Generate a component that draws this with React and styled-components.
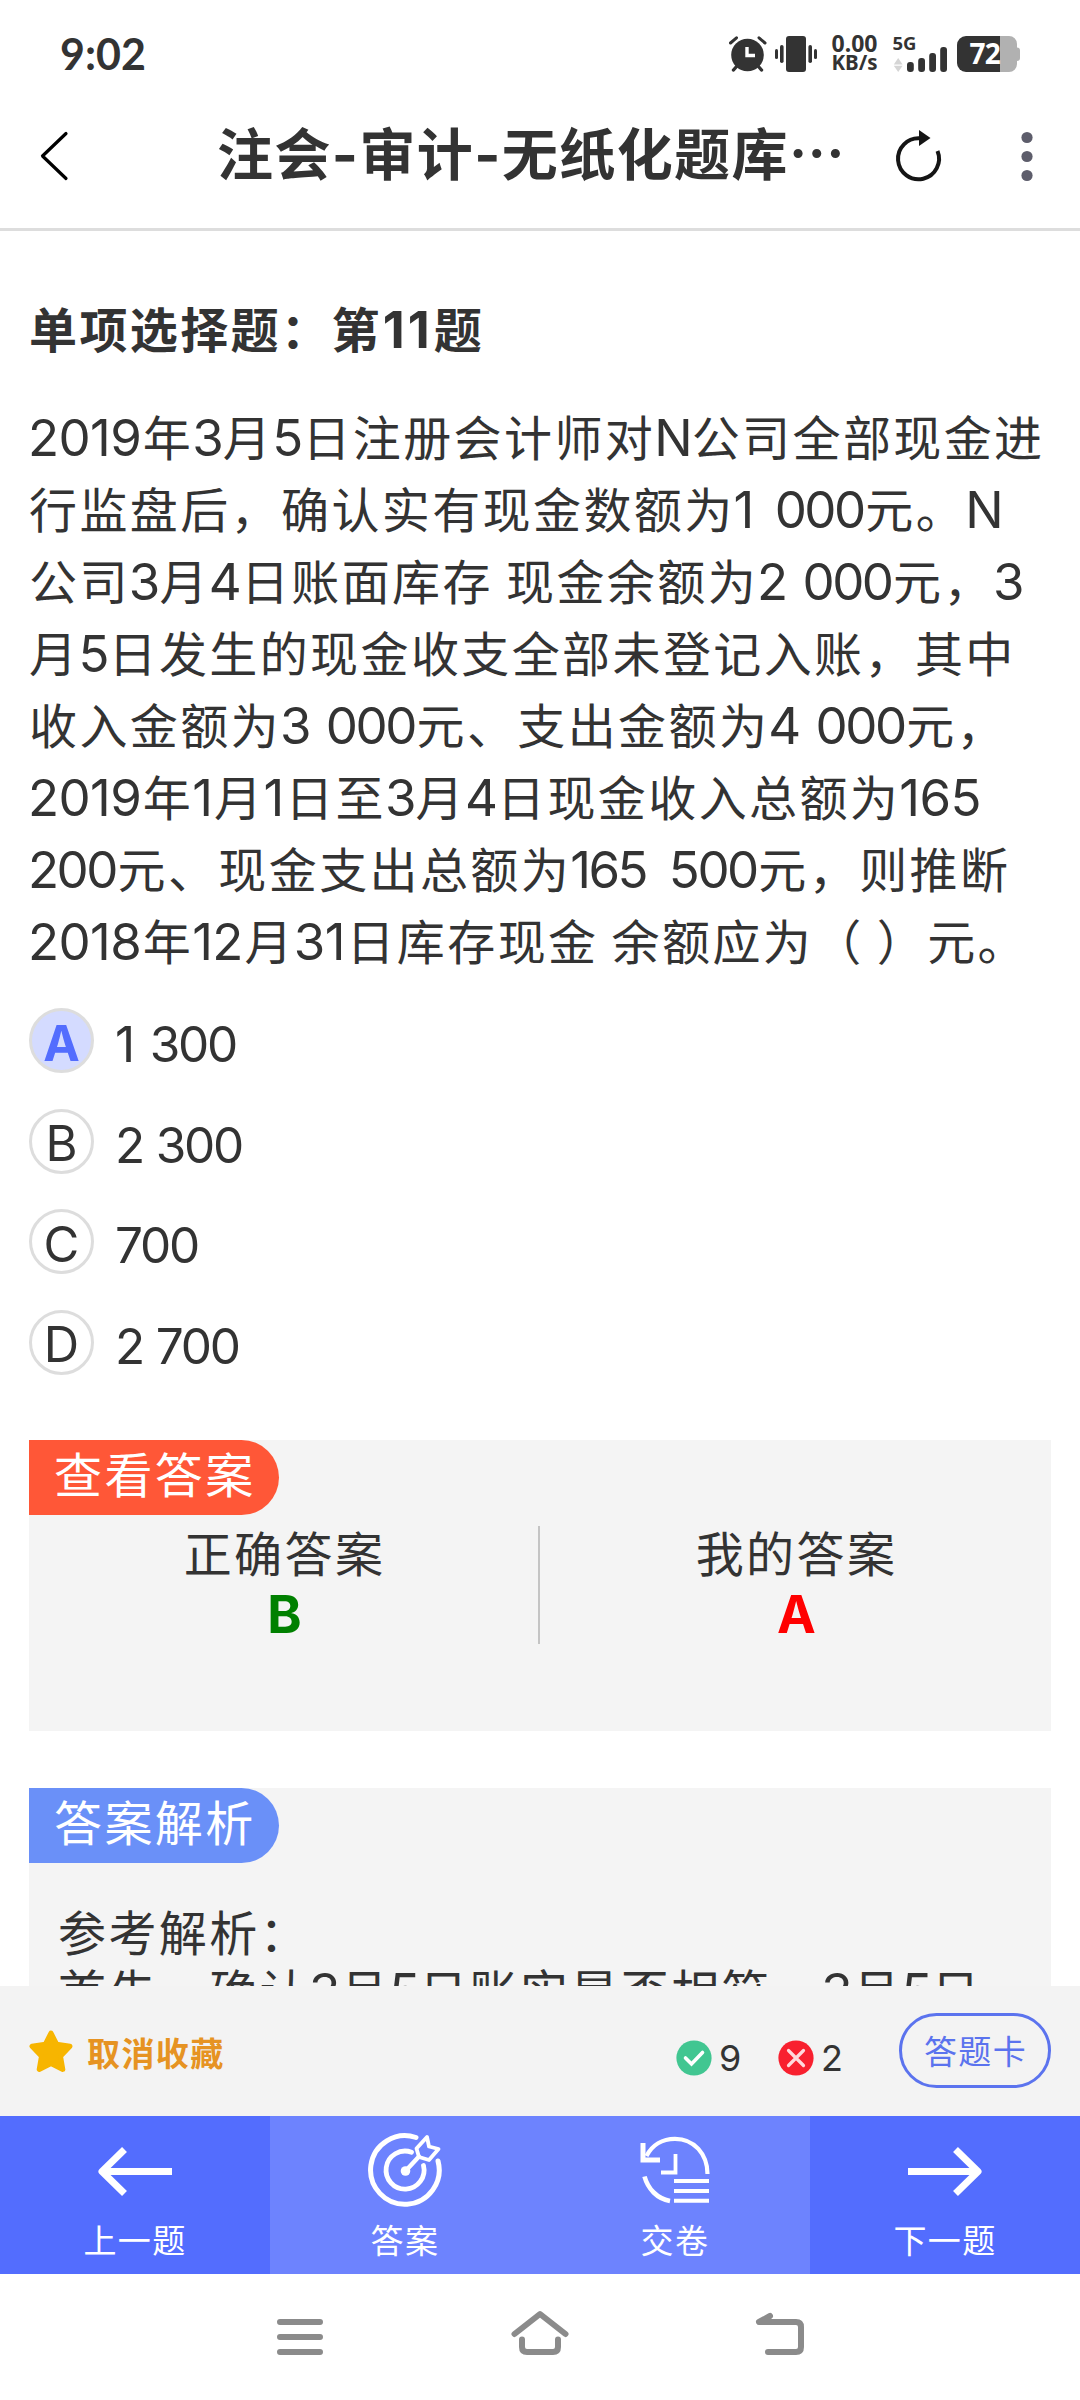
import styled, { createGlobalStyle } from 'styled-components'

const GlobalStyle = createGlobalStyle`
	* {
		box-sizing: border-box;
	}

	body {
		margin: 0;
		background: #fff;
		color: #333;
		font-family: "Noto Sans CJK SC", sans-serif;
	}
`

const Screen = styled.div`
	width: 1080px;
	height: 2400px;
	display: flex;
	flex-direction: column;
	overflow: hidden;
	background: #fff;
`

const StatusBar = styled.div`
	height: 98px;
	padding: 36px 60px 0 60px;
	display: flex;
	justify-content: space-between;
	align-items: flex-start;
`

const Clock = styled.div`
	font: 700 43px/36px Lato, sans-serif;
`

const StatusIcons = styled.div`
	display: flex;
	height: 36px;
`

const NetSpeed = styled.div`
	width: 63px;
	margin: -2px 0 0 6px;
	display: flex;
	flex-direction: column;
	align-items: center;
	font: 700 20.5px/21px "Noto Sans", sans-serif;
	white-space: nowrap;

	span:first-child {
		font-size: 23px;
		line-height: 18px;
	}
`

const Header = styled.header`
	height: 133px;
	border-bottom: 3px solid #ddd;
	display: flex;
	align-items: flex-start;
	padding: 28px 0 0 35px;
`

const Title = styled.h1`
	margin: -3px 0 0 144px;
	width: 670px;
	font-size: 56px;
	line-height: 56px;
	font-weight: 700;
	letter-spacing: 1.4px;
	white-space: nowrap;
`

const Hyphen = styled.span`
	font-family: Inter, sans-serif;
	line-height: 1;
`

const Main = styled.main`
	height: 1755px;
	padding: 60px 29px 0;
	overflow: hidden;
`

// digits and latin letters sit slightly larger than the hanzi around them
const Latin = styled.span`
	font-family: Inter, sans-serif;
	font-size: 51px;
	line-height: 1;
	letter-spacing: ${({ $tight }) => ($tight ? -2.5 : -0.6)}px;
	word-spacing: ${({ $gap }) => $gap}px;
	margin: 0 1.6px 0 -1px;
`

const QuestionType = styled.h2`
	margin: 0 0 36px;
	font-size: 48px;
	line-height: 72px;
	font-weight: 700;
	letter-spacing: 2.4px;

	${Latin} {
		letter-spacing: 3px;
		margin: 0 1px;
	}
`

const Question = styled.div`
	font-size: 48px;
	line-height: 72px;
	letter-spacing: 2.4px;
`

const Line = styled.div`
	white-space: pre;
`

const Options = styled.ul`
	list-style: none;
	margin: 33px 0 65px;
	padding: 0;
	display: flex;
	flex-direction: column;
	gap: 35.6px;
`

const Option = styled.li`
	height: 65px;
	display: flex;
	align-items: center;
	font: 400 49.5px/60px Inter, sans-serif;
	letter-spacing: -2.2px;
`

const Letter = styled.div`
	width: 65px;
	height: 65px;
	margin-right: 21px;
	padding-top: 5px;
	border: 3px solid #ddd;
	border-radius: 50%;
	display: flex;
	align-items: center;
	justify-content: center;
	letter-spacing: 0;
	font-size: 49px;
	line-height: 1;
	background: ${({ $active }) => ($active ? '#d4dbff' : '#fff')};
	color: ${({ $active }) => ($active ? '#536dfe' : '#333')};
	font-weight: ${({ $active }) => ($active ? 700 : 400)};
`

const OptionText = styled.span`
	padding-top: 7px;
	word-spacing: ${({ $gap }) => $gap}px;
`

const Panel = styled.section`
	height: ${({ $height }) => $height}px;
	margin-bottom: 57px;
	background: #f4f4f4;
	font-size: 48px;
	letter-spacing: 2.4px;
`

const Tag = styled.div`
	width: 250px;
	height: 75px;
	padding-left: 25px;
	line-height: 65px;
	color: #fff;
	border-radius: 0 38px 38px 0;
	background: ${({ $color }) => $color};
`

const Compare = styled.div`
	margin-top: 11px;
	height: 118px;
	display: flex;
`

const CompareItem = styled.div`
	flex: 0 0 50%;
	display: flex;
	flex-direction: column;
	align-items: center;
	padding-left: 2px;
	line-height: 51px;

	&:first-child {
		border-right: 2px solid #c4c4c4;
	}
`

const Mark = styled.span`
	margin-top: 7px;
	font: 700 52px/62px Inter, sans-serif;
	letter-spacing: 0;
	color: ${({ $color }) => $color};
`

const Analysis = styled.div`
	padding: 38px 29px 0;
	line-height: 59px;
`

const Toolbar = styled.div`
	height: 130px;
	padding: 0 29px;
	background: #f3f3f3;
	display: flex;
	align-items: flex-start;
`

const Favorite = styled.div`
	width: 647px;
	padding-top: 43px;
	display: flex;
	align-items: flex-start;
	gap: 14px;
	color: #e69322;
	font-size: 33px;
	line-height: 46px;
	font-weight: 700;
	letter-spacing: 1.4px;
`

const Count = styled.div`
	width: ${({ $width }) => $width}px;
	padding-top: 54px;
	display: flex;
	gap: 7px;
	font: 400 36px/36px Inter, sans-serif;
`

const CardButton = styled.button`
	width: 152px;
	height: 75px;
	margin: 27px 0 0 auto;
	padding: 0 0 1px 1px;
	flex-shrink: 0;
	border: 3px solid #5b73ee;
	border-radius: 38px;
	background: none;
	color: #5b73ee;
	font: 400 33px/66px "Noto Sans CJK SC", sans-serif;
	letter-spacing: 1.4px;
`

const Tabs = styled.nav`
	height: 158px;
	display: grid;
	grid-template-columns: repeat(4, 1fr);
`

const Tab = styled.div`
	display: flex;
	flex-direction: column;
	align-items: center;
	padding-top: 15px;
	color: #fff;
	font-size: 33px;
	line-height: 46px;
	letter-spacing: 1.4px;
	background: ${({ $light }) => ($light ? '#6d83fe' : '#536dfe')};

	svg {
		margin-bottom: 5px;
	}
`

const SystemNav = styled.div`
	height: 126px;
	padding: 32px 270px 0;
	display: flex;
	justify-content: space-between;
`

const question = [
	'2019年3月5日注册会计师对N公司全部现金进',
	'行监盘后，确认实有现金数额为1 000元。N',
	'公司3月4日账面库存 现金余额为2 000元，3',
	'月5日发生的现金收支全部未登记入账，其中',
	'收入金额为3 000元、支出金额为4 000元，',
	'2019年1月1日至3月4日现金收入总额为165',
	'200元、现金支出总额为165 500元，则推断',
	'2018年12月31日库存现金 余额应为（ ）元。',
]

const options = [
	{ letter: 'A', text: '1 300' },
	{ letter: 'B', text: '2 300' },
	{ letter: 'C', text: '700' },
	{ letter: 'D', text: '2 700' },
]

const groupGap = (text, narrow, wide) => (text.startsWith('1') ? wide : narrow)

function MixedText({ text }) {
	return text.split(/([0-9A-Z]+(?: [0-9]+)?)/).map((part, i) =>
		i % 2 ? (
			<Latin key={i} $tight={part.includes(' ') || !part.includes('1')} $gap={groupGap(part, 5, 11)}>
				{part}
			</Latin>
		) : (
			part
		)
	)
}

function AlarmIcon() {
	return (
		<svg width="38" height="36" viewBox="0 0 38 36" fill="none" stroke="#333" strokeLinecap="round">
			<circle cx="18.5" cy="19" r="16.3" fill="#333" stroke="none" />
			<path d="M1.5 7L7.5 1.8M30 1.8L36 7" stroke="#fff" strokeWidth="6" />
			<path d="M1.5 7L7.5 1.8M30 1.8L36 7" strokeWidth="3" />
			<path d="M8 30L4.5 34M29 30L32.5 34" strokeWidth="3.4" />
			<path d="M18 11V19.5H26" stroke="#fff" strokeWidth="3.4" strokeLinecap="butt" />
		</svg>
	)
}

function VibrateIcon() {
	return (
		<svg width="42" height="36" viewBox="0 0 42 36" fill="#333" style={{ marginLeft: 8 }}>
			<rect x="11" y="0" width="20" height="36" rx="3" />
			<rect x="5" y="9" width="3.6" height="18" rx="1.8" />
			<rect x="0" y="13" width="3" height="10" rx="1.5" />
			<rect x="33.4" y="9" width="3.6" height="18" rx="1.8" />
			<rect x="39" y="13" width="3" height="10" rx="1.5" />
		</svg>
	)
}

function SignalIcon() {
	return (
		<svg width="55" height="36" viewBox="0 0 55 36" fill="#333" style={{ marginLeft: 7 }}>
			<text x="-0.5" y="13.8" fontSize="18.5" fontWeight="700" fontFamily="Noto Sans">5G</text>
			<path d="M5.2 22L9.6 28.4H0.8ZM5.2 36L9.6 29.8H0.8Z" fill="#d5d5d5" />
			<rect x="14" y="26" width="6.8" height="10" rx="3" />
			<rect x="25.2" y="22" width="6.8" height="14" rx="3" />
			<rect x="36.2" y="17" width="6.8" height="19" rx="3" />
			<rect x="47.2" y="11" width="6.8" height="25" rx="3" />
		</svg>
	)
}

function BatteryIcon() {
	return (
		<svg width="63" height="36" viewBox="0 0 63 36" style={{ marginLeft: 9 }}>
			<path d="M43 0H52a8 8 0 0 1 8 8V11.5q3 0 3 3V22q0 3-3 3V28a8 8 0 0 1-8 8H43Z" fill="#b1b1b1" />
			<path d="M43 0H9a9 9 0 0 0-9 9V27a9 9 0 0 0 9 9H43Z" fill="#333" />
			<text x="12.5" y="28" fontSize="28" fontWeight="700" fontFamily="Noto Sans" fill="#fff" letterSpacing="-0.8">72</text>
		</svg>
	)
}

function BackIcon() {
	return (
		<svg width="38" height="60" viewBox="0 0 38 60" fill="none" stroke="#000" strokeWidth="3.2" strokeLinecap="round" strokeLinejoin="round">
			<path d="M31 7.5L7.5 30L31 52.5" />
		</svg>
	)
}

function ReloadIcon() {
	return (
		<svg width="60" height="60" viewBox="0 0 60 60" fill="none">
			<path d="M33 12.3A20.5 20.5 0 1 0 50.5 25" stroke="#151515" strokeWidth="4" />
			<path d="M32 4V20L43.5 12Z" fill="#151515" />
		</svg>
	)
}

function MoreIcon() {
	return (
		<svg width="20" height="60" viewBox="0 0 20 60" fill="#5d5d6b" style={{ marginLeft: 69.5 }}>
			<circle cx="10" cy="11.5" r="5.6" />
			<circle cx="10" cy="30.5" r="5.6" />
			<circle cx="10" cy="49.5" r="5.6" />
		</svg>
	)
}

function StarIcon() {
	return (
		<svg width="44" height="44" viewBox="0 0 44 44" fill="#f7b500" stroke="#f7b500" strokeWidth="5" strokeLinejoin="round">
			<path d="M22 4L27.6 15.2L41 17.2L31.5 27.2L33.8 40.4L22 34.4L10.2 40.4L12.5 27.2L3 17.2L16.4 15.2Z" />
		</svg>
	)
}

function RightIcon() {
	return (
		<svg width="36" height="36" viewBox="0 0 36 36" fill="none">
			<circle cx="18" cy="18" r="17.6" fill="#41c691" />
			<path d="M9.5 18L15.5 24L26.5 12.5" stroke="#fff" strokeWidth="3.6" strokeLinecap="round" />
		</svg>
	)
}

function WrongIcon() {
	return (
		<svg width="36" height="36" viewBox="0 0 36 36" fill="none">
			<circle cx="18" cy="18" r="17.6" fill="#f8202f" />
			<path d="M10.5 10.5L25.5 25.5M25.5 10.5L10.5 25.5" stroke="#ffd9dc" strokeWidth="3.2" strokeLinecap="round" />
		</svg>
	)
}

function ArrowIcon({ right }) {
	return (
		<svg width="80" height="80" viewBox="0 0 80 80" fill="none" stroke="#fff" strokeWidth="7">
			<path d={right ? 'M3 40.5H73M50.5 18.5L73 40.5L50.5 62.5' : 'M77 40.5H7M29.5 18.5L7 40.5L29.5 62.5'} strokeLinejoin="round" />
		</svg>
	)
}

function TargetIcon() {
	return (
		<svg width="80" height="80" viewBox="0 0 80 80" fill="none" stroke="#fff" strokeWidth="5" strokeLinecap="round" strokeLinejoin="round">
			<path d="M51 6.5A34.3 34.3 0 1 0 73 30" />
			<path d="M46.5 21.2A19 19 0 1 0 58.5 34.5" strokeWidth="4.8" />
			<circle cx="40.5" cy="40" r="4.8" fill="#fff" stroke="none" />
			<path d="M40.5 40L54 25.5" strokeWidth="4.4" />
			<path d="M54 26L51.5 17.5L62 6L64 15.5L73.5 18L64 29Z" strokeWidth="3.8" />
		</svg>
	)
}

function SubmitIcon() {
	return (
		<svg width="80" height="80" viewBox="0 0 80 80" fill="none" stroke="#fff">
			<path d="M11.5 25C17 14 27.5 7.8 40 7.8C59 7.8 72.5 23 72.5 43" strokeWidth="4.2" />
			<path d="M8 12V29H25" strokeWidth="5" />
			<path d="M9.5 45.5C13 58 22 67.5 35 70" strokeWidth="4.6" />
			<path d="M40.5 23V41.5H26" strokeWidth="3.8" />
			<path d="M39 50H74M39 60H74M39 69.8H74" strokeWidth="4" />
		</svg>
	)
}

function MenuIcon() {
	return (
		<svg width="60" height="60" viewBox="0 0 60 60" stroke="#8b8b8b" strokeWidth="6" strokeLinecap="round">
			<path d="M10 16H50M10 31H50M10 46H50" />
		</svg>
	)
}

function HomeIcon() {
	return (
		<svg width="60" height="60" viewBox="0 0 60 60" fill="none" stroke="#8b8b8b" strokeWidth="6" strokeLinecap="round" strokeLinejoin="round">
			<path d="M4.5 28L30 8L55.5 28" />
			<path d="M12 33.5V41Q12 46 17 46H43Q48 46 48 41V33.5" />
		</svg>
	)
}

function ReturnIcon() {
	return (
		<svg width="60" height="60" viewBox="0 0 60 60" fill="none" stroke="#8b8b8b" strokeWidth="6" strokeLinecap="round" strokeLinejoin="round">
			<path d="M20 10L9 16H46Q51 16 51 21V41Q51 46 46 46H18" />
		</svg>
	)
}

function App() {
	return (
		<Screen>
			<GlobalStyle />
			<StatusBar>
				<Clock>9:02</Clock>
				<StatusIcons>
					<AlarmIcon />
					<VibrateIcon />
					<NetSpeed>
						<span>0.00</span>
						<span>KB/s</span>
					</NetSpeed>
					<SignalIcon />
					<BatteryIcon />
				</StatusIcons>
			</StatusBar>

			<Header>
				<BackIcon />
				<Title>
					注会<Hyphen>-</Hyphen>审计<Hyphen>-</Hyphen>无纸化题库…
				</Title>
				<ReloadIcon />
				<MoreIcon />
			</Header>

			<Main>
				<QuestionType>
					<MixedText text="单项选择题：第11题" />
				</QuestionType>
				<Question>
					{question.map((line) => (
						<Line key={line}>
							<MixedText text={line} />
						</Line>
					))}
				</Question>

				<Options>
					{options.map(({ letter, text }) => (
						<Option key={letter}>
							<Letter $active={letter === 'A'}>{letter}</Letter>
							<OptionText $gap={groupGap(text, 1, 5)}>{text}</OptionText>
						</Option>
					))}
				</Options>

				<Panel $height={291}>
					<Tag $color="#ff5737">查看答案</Tag>
					<Compare>
						<CompareItem>
							正确答案
							<Mark $color="#008000">B</Mark>
						</CompareItem>
						<CompareItem>
							我的答案
							<Mark $color="#f00">A</Mark>
						</CompareItem>
					</Compare>
				</Panel>

				<Panel $height={400}>
					<Tag $color="#6a90f8">答案解析</Tag>
					<Analysis>
						<Line>参考解析：</Line>
						<Line>
							<MixedText text="首先，确认3月5日账实是否相符。3月5日" />
						</Line>
					</Analysis>
				</Panel>
			</Main>

			<Toolbar>
				<Favorite>
					<StarIcon />
					取消收藏
				</Favorite>
				<Count $width={102}>
					<RightIcon />9
				</Count>
				<Count $width={121}>
					<WrongIcon />2
				</Count>
				<CardButton>答题卡</CardButton>
			</Toolbar>

			<Tabs>
				<Tab>
					<ArrowIcon />
					上一题
				</Tab>
				<Tab $light>
					<TargetIcon />
					答案
				</Tab>
				<Tab $light>
					<SubmitIcon />
					交卷
				</Tab>
				<Tab>
					<ArrowIcon right />
					下一题
				</Tab>
			</Tabs>

			<SystemNav>
				<MenuIcon />
				<HomeIcon />
				<ReturnIcon />
			</SystemNav>
		</Screen>
	)
}

export default App
